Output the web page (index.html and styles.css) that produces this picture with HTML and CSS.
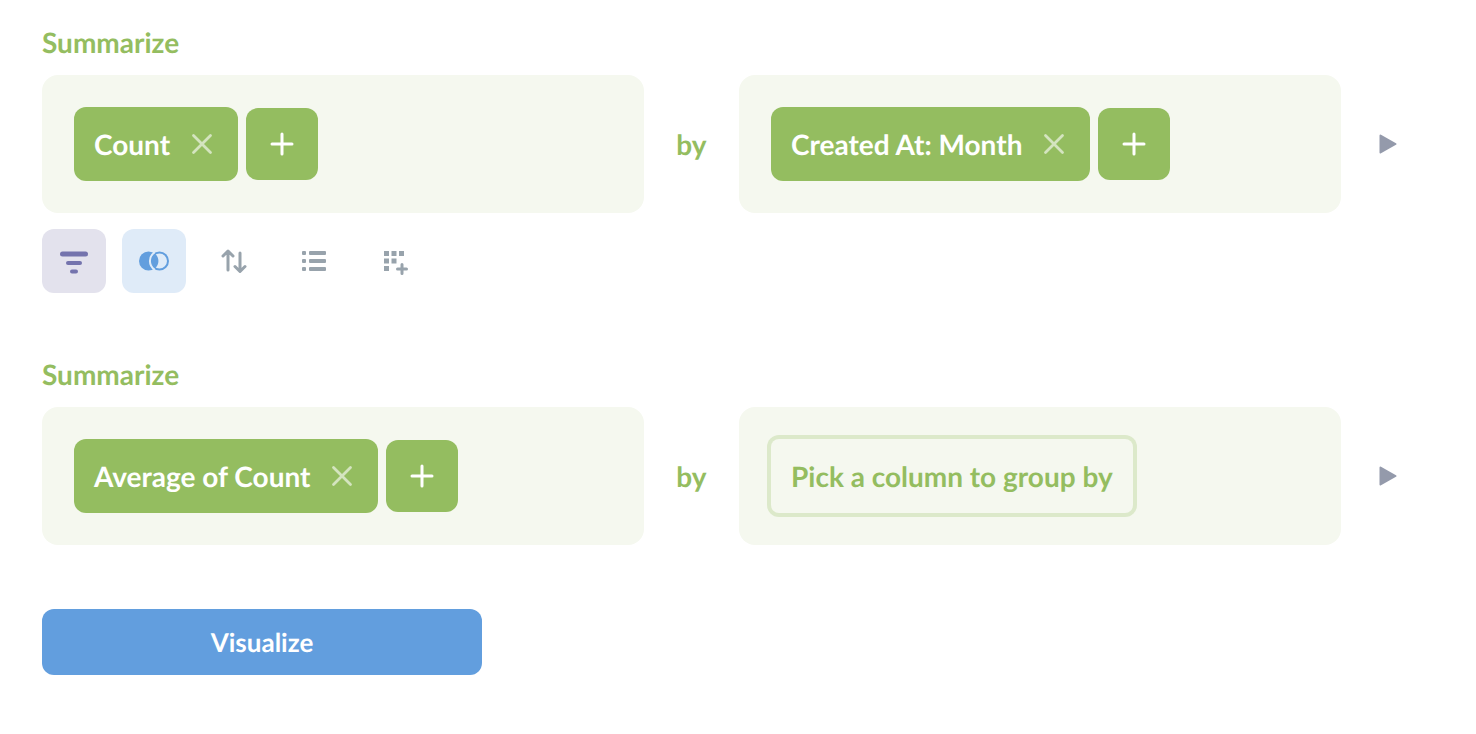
FILE: index.html
```html
<!DOCTYPE html>
<html lang="en">
<head>
<meta charset="utf-8">
<title>Question builder</title>
<link rel="stylesheet" href="styles.css">
</head>
<body>
<svg class="sprite" aria-hidden="true">
  <symbol id="close" viewBox="0 0 32 32"><path d="M7.500 7.500l17 17M24.500 7.500l-17 17" fill="none" stroke="currentColor" stroke-width="2.800" stroke-linecap="round"/></symbol>
  <symbol id="plus" viewBox="0 0 32 32"><path d="M16 6v20M6 16h20" fill="none" stroke="currentColor" stroke-width="3" stroke-linecap="round"/></symbol>
  <symbol id="play" viewBox="0 0 20 20"><path d="M2.500 1.500L17.500 10 2.500 18.500z" fill="currentColor" stroke="currentColor" stroke-width="2" stroke-linejoin="round"/></symbol>
</svg>
<main class="notebook">
  <section class="step">
    <h2 class="step-title">Summarize</h2>
    <div class="step-row">
      <div class="panel">
        <div class="chip">Count<button class="remove" type="button" aria-label="Remove Count"><svg class="icon"><use href="#close"/></svg></button></div>
        <button class="add" type="button" aria-label="Add metric"><svg class="icon"><use href="#plus"/></svg></button>
      </div>
      <span class="by">by</span>
      <div class="panel">
        <div class="chip">Created At: Month<button class="remove" type="button" aria-label="Remove Created At: Month"><svg class="icon"><use href="#close"/></svg></button></div>
        <button class="add" type="button" aria-label="Add grouping"><svg class="icon"><use href="#plus"/></svg></button>
      </div>
      <button class="preview" type="button" aria-label="Preview"><svg class="play"><use href="#play"/></svg></button>
    </div>
    <div class="actions">
      <button class="action action-filter" type="button" aria-label="Filter">
        <svg class="icon" viewBox="0 0 32 32" fill="none" stroke="currentColor" stroke-linecap="round"><path d="M4.500 9h23" stroke-width="5"/><path d="M10 18h12" stroke-width="4"/><path d="M14 26.500h4" stroke-width="4"/></svg>
      </button>
      <button class="action action-join" type="button" aria-label="Join data">
        <svg class="icon" viewBox="0 0 32 32"><circle cx="10.500" cy="16" r="9.500" fill="currentColor"/><circle cx="21.500" cy="16" r="9.700" fill="#dfebf8"/><circle cx="21.500" cy="16" r="8.500" fill="none" stroke="currentColor" stroke-width="2"/><path d="M17 8.700a9.500 9.500 0 0 1 0 14.600a9.500 9.500 0 0 1 0-14.600z" fill="currentColor"/><path d="M16.500 7.500a10.200 10.200 0 0 0 0 17" fill="none" stroke="#dfebf8" stroke-width="2"/></svg>
      </button>
      <button class="action" type="button" aria-label="Sort">
        <svg class="icon" viewBox="0 0 32 32" fill="none" stroke="currentColor" stroke-width="3" stroke-linecap="round" stroke-linejoin="round"><path d="M10 25V6.500M5 11l5-5 5 5M22 8v18M17 21.500l5 5 5-5"/></svg>
      </button>
      <button class="action" type="button" aria-label="Row limit">
        <svg class="icon" viewBox="0 0 32 32" fill="currentColor"><rect x="4" y="6" width="4" height="4" rx="1"/><rect x="11" y="6" width="17" height="4" rx="1"/><rect x="4" y="14" width="4" height="4" rx="1"/><rect x="11" y="14" width="17" height="4" rx="1"/><rect x="4" y="22" width="4" height="4" rx="1"/><rect x="11" y="22" width="17" height="4" rx="1"/></svg>
      </button>
      <button class="action" type="button" aria-label="Summarize">
        <svg class="icon" viewBox="0 0 32 32" fill="currentColor"><path d="M6 6h5v5H6zM13.500 6h5v5h-5zM21 6h5v5h-5zM6 13.500h5v5H6zM13.500 13.500h5v5h-5zM6 21h5v5H6z"/><path d="M24 19.500v9M19.500 24h9" fill="none" stroke="currentColor" stroke-width="3" stroke-linecap="round"/></svg>
      </button>
    </div>
  </section>
  <section class="step">
    <h2 class="step-title">Summarize</h2>
    <div class="step-row">
      <div class="panel">
        <div class="chip">Average of Count<button class="remove" type="button" aria-label="Remove Average of Count"><svg class="icon"><use href="#close"/></svg></button></div>
        <button class="add" type="button" aria-label="Add metric"><svg class="icon"><use href="#plus"/></svg></button>
      </div>
      <span class="by">by</span>
      <div class="panel">
        <button class="chip chip-empty" type="button">Pick a column to group by</button>
      </div>
      <button class="preview" type="button" aria-label="Preview"><svg class="play"><use href="#play"/></svg></button>
    </div>
  </section>
  <button class="visualize" type="button">Visualize</button>
</main>
</body>
</html>
```
FILE: styles.css
```css
* {
  box-sizing: border-box;
}

body {
  margin: 0;
  background: #fff;
  color: #94bd60;
  font: 700 28px/34px Lato, sans-serif;
  text-rendering: geometricPrecision;
}

button {
  margin: 0;
  padding: 0;
  border: 0;
  background: none;
  color: inherit;
  font: inherit;
  text-rendering: inherit;
  cursor: pointer;
}

.sprite {
  position: absolute;
  width: 0;
  height: 0;
}

.icon {
  display: block;
  width: 32px;
  height: 32px;
}

.notebook {
  display: flex;
  flex-direction: column;
  align-items: flex-start;
  gap: 64px;
  padding: 25px 42px;
}

.step {
  width: 100%;
}

.step-title {
  margin: 0 0 16px;
  font: inherit;
}

.step-row {
  display: grid;
  grid-template-columns: 1fr 95px 1fr 93px;
  align-items: center;
}

.panel {
  display: flex;
  flex-wrap: wrap;
  align-items: center;
  gap: 8px;
  padding: 32px;
  border-radius: 16px;
  background: #f5f8ef;
}

.chip {
  display: flex;
  align-items: center;
  gap: 16px;
  min-height: 74px;
  padding: 0 20px;
  border-radius: 12px;
  background: #94bd60;
  color: #fff;
}

.chip-empty {
  border-radius: 8px;
  background: none;
  box-shadow: 0 0 0 4px #dce9ca;
  color: #94bd60;
}

.remove {
  opacity: 0.6;
}

.add {
  display: grid;
  place-items: center;
  width: 72px;
  height: 72px;
  border-radius: 12px;
  background: #94bd60;
  color: #fff;
}

.by {
  text-align: center;
}

.preview {
  justify-self: center;
  color: #949aab;
}

.play {
  display: block;
  width: 20px;
  height: 20px;
}

.actions {
  display: flex;
  gap: 16px;
  margin-top: 16px;
}

.action {
  display: grid;
  place-items: center;
  width: 64px;
  height: 64px;
  border-radius: 12px;
  color: #98a3ac;
}

.action-filter {
  background: #e3e2ed;
  color: #7473ad;
}

.action-join {
  background: #dfebf8;
  color: #629ede;
}

.visualize {
  width: 440px;
  max-width: 100%;
  height: 66px;
  border-radius: 12px;
  background: #629ede;
  color: #fff;
  font-size: 26px;
}
```
